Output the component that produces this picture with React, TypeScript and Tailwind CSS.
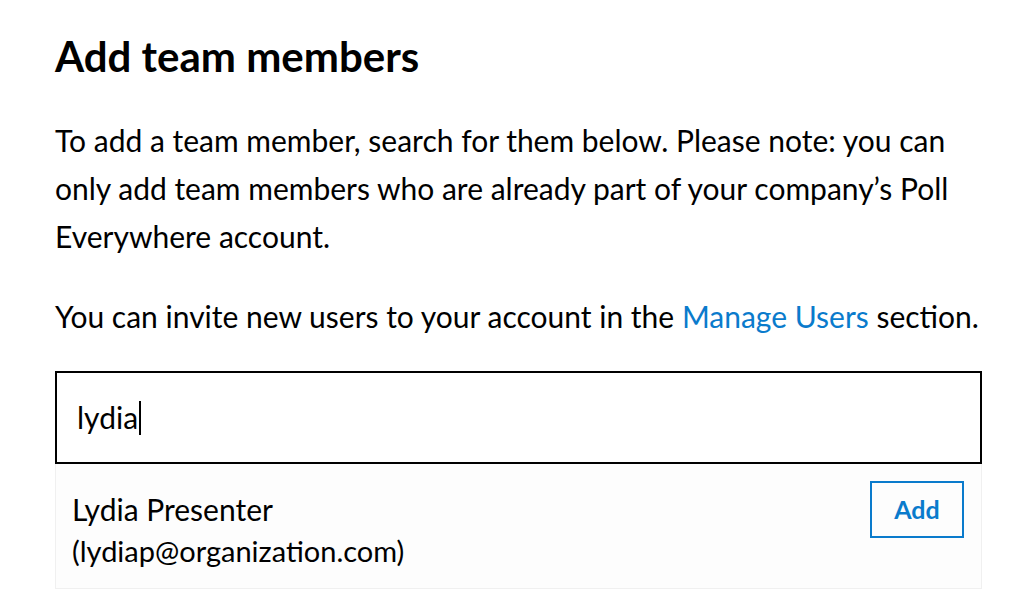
export default function App() {
  return (
    <div className="min-h-screen bg-white font-['Lato',sans-serif] text-black">
      <div className="w-[927px] pl-[55px] pt-[28px] box-content">
        <h1 className="text-[42px] font-bold leading-[56px]">Add team members</h1>
        <p className="mt-[32px] text-[30px] leading-[48px]">
          To add a team member, search for them below. Please note: you can only add team members who are already part of
          your company’s Poll Everywhere account.
        </p>
        <p className="mt-[32px] text-[30px] leading-[48px]">
          You can invite new users to your account in the{" "}
          <a href="#" className="text-[#0a7bcc]">Manage Users</a> section.
        </p>
        <div className="mt-[31px] flex h-[93px] items-center border-2 border-black px-[20px]">
          <span className="text-[30px]">lydia</span>
          <span className="ml-[1px] h-[34px] w-[2px] bg-black" />
        </div>
        <div className="flex h-[125px] items-start justify-between border-x border-b border-[#f0f0f0] bg-[#fdfdfd] pl-[16px] pr-[17px] pt-[24px]">
          <div>
            <div className="text-[30px] leading-[42px]">Lydia Presenter</div>
            <div className="text-[29px] leading-[42px]">(lydiap@organization.com)</div>
          </div>
          <button className="mt-[-7px] h-[57px] w-[94px] border-2 border-[#0a7bcc] text-[25px] font-bold text-[#0a7bcc]">
            Add
          </button>
        </div>
      </div>
    </div>
  );
}
